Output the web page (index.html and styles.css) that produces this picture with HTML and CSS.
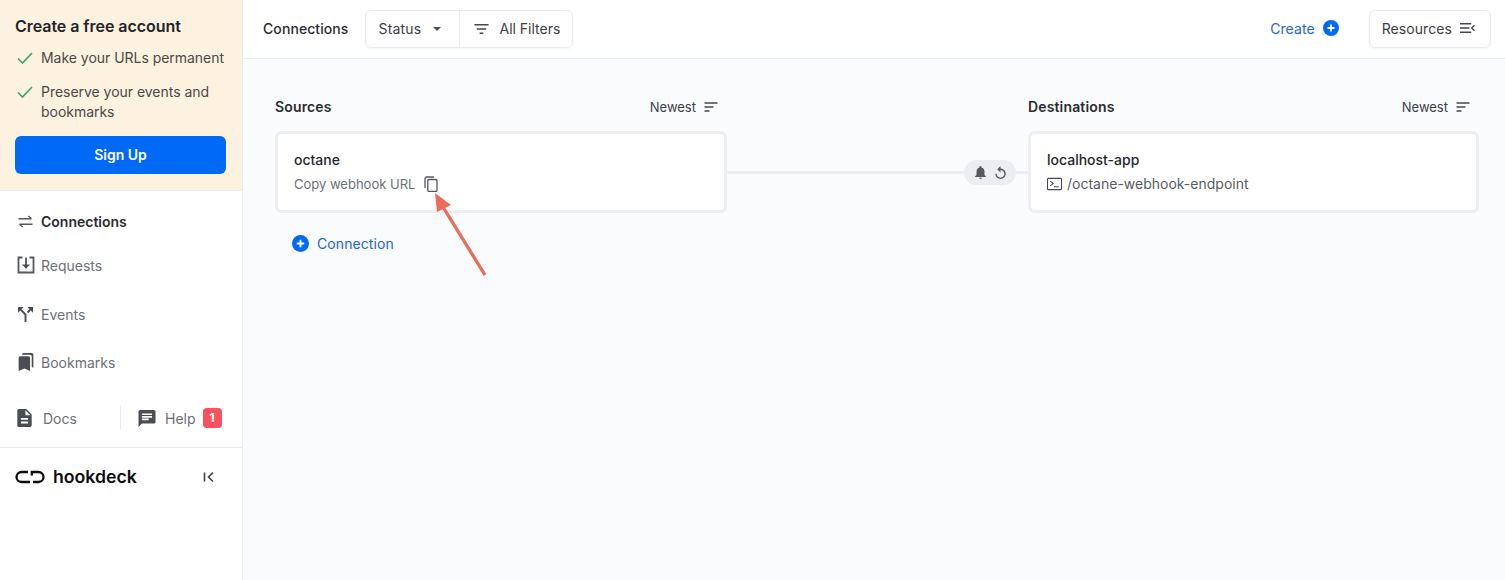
FILE: index.html
```html
<!DOCTYPE html>
<html lang="en">
<head>
<meta charset="utf-8">
<title>Connections</title>
<link rel="stylesheet" href="styles.css">
</head>
<body>
<div class="app">
  <aside class="sidebar">
    <section class="promo">
      <h2 class="promo-title">Create a free account</h2>
      <ul class="promo-list">
        <li class="promo-item"><svg class="check" viewBox="0 0 16 16"><path d="M1 8.500 5.500 13 15 3"/></svg><span>Make your URLs permanent</span></li>
        <li class="promo-item"><svg class="check" viewBox="0 0 16 16"><path d="M1 8.500 5.500 13 15 3"/></svg><span>Preserve your events and bookmarks</span></li>
      </ul>
      <button class="signup">Sign Up</button>
    </section>
    <nav class="nav">
      <a class="nav-item active"><svg class="nav-icon conn" viewBox="0 0 16 14"><path class="stroke" d="M.5 4h14M11 1l3.500 3M15.500 10H1.500M5 13 1.500 10"/></svg>Connections</a>
      <a class="nav-item requests"><svg class="nav-icon big" viewBox="0 0 18 18"><path class="stroke thick" d="M5.500 1.500H1.500v15h15v-15h-4M9 1.500V11.500"/><path class="fill" d="M5 8.500h8L9 12.800z"/></svg>Requests</a>
      <a class="nav-item events"><svg class="nav-icon" viewBox="4 4 16 16"><path class="fill" d="M14 4l2.290 2.290-2.880 2.880 1.420 1.420 2.880-2.880L20 10V4h-6zm-4 0H4v6l2.290-2.290 4.710 4.700V20h2v-8.410l-5.290-5.300L10 4z"/></svg>Events</a>
      <a class="nav-item bookmarks"><svg class="nav-icon big" viewBox="3 1 18 22"><path class="fill" d="M19 18l2 1V3c0-1.100-.9-2-2-2H8.990C7.890 1 7 1.900 7 3h10c1.100 0 2 .9 2 2v13zM15 5H5c-1.100 0-2 .9-2 2v16l7-3 7 3V7c0-1.100-.9-2-2-2z"/></svg>Bookmarks</a>
    </nav>
    <div class="side-links">
      <a class="docs"><svg class="doc-icon" viewBox="4 2 16 20"><path class="fill" d="M14 2H6c-1.100 0-1.990.9-1.990 2L4 20c0 1.100.89 2 1.990 2H18c1.100 0 2-.9 2-2V8l-6-6zm2 16H8v-2h8v2zm0-4H8v-2h8v2zm-3-5V3.500L18.500 9H13z"/></svg>Docs</a>
      <a class="help"><svg class="help-icon" viewBox="2 2 20 20"><path class="fill" d="M20 2H4c-1.100 0-1.990.9-1.990 2L2 22l4-4h14c1.100 0 2-.9 2-2V4c0-1.100-.9-2-2-2zM6 9h12v2H6V9zm8 5H6v-2h8v2zm4-6H6V6h12v2z"/></svg>Help<span class="badge">1</span></a>
    </div>
    <div class="brand">
      <svg class="logo" viewBox="0 0 30 14"><path d="M13 2H6.500a5 5 0 0 0 0 10H15M16.800 5.500V2H23.500a5 5 0 0 1 0 10H18"/></svg>
      <span class="brand-name">hookdeck</span>
      <svg class="collapse" viewBox="0 0 12 12"><path d="M1.500 1.500v9M10 1.500 5.500 6l4.500 4.500"/></svg>
    </div>
  </aside>
  <main class="main">
    <header class="topbar">
      <span class="page-title">Connections</span>
      <div class="filters">
        <button class="filter status">Status<svg class="caret" viewBox="0 0 8 4"><path d="M0 0h8L4 4z"/></svg></button>
        <button class="filter all"><svg class="lines" viewBox="0 0 16 12"><path d="M.5 1.500h15M3 6h10M6 10.500h4"/></svg>All Filters</button>
      </div>
      <a class="create">Create<svg class="plus" viewBox="0 0 16 16"><circle cx="8" cy="8" r="8"/><path d="M8 4.500v7M4.500 8h7"/></svg></a>
      <button class="resources">Resources<svg class="res-icon" viewBox="0 0 16 12"><path d="M0 1.500h12M0 6h10M0 10.500h12M15.500 3 12.500 6l3 3"/></svg></button>
    </header>
    <div class="canvas">
      <section class="col">
        <div class="col-head"><h3 class="col-title">Sources</h3><span class="sort">Newest<svg class="sort-icon" viewBox="0 0 14 10"><path d="M.500 1h13M.500 5h9M.500 9h5"/></svg></span></div>
        <div class="card">
          <div class="card-name">octane</div>
          <div class="card-sub">Copy webhook URL<svg class="copy" viewBox="0 0 14 16"><path d="M1 12V2.500C1 1.600 1.600 1 2.500 1H10"/><rect x="3.800" y="3.500" width="9.200" height="12" rx="1.200"/></svg></div>
        </div>
        <a class="add-conn"><svg class="plus" viewBox="0 0 16 16"><circle cx="8" cy="8" r="8"/><path d="M8 4.500v7M4.500 8h7"/></svg>Connection</a>
      </section>
      <div class="link">
        <span class="link-line"></span>
        <span class="pill">
          <svg class="bell" viewBox="4 2.500 16 19.500"><path d="M12 22c1.100 0 2-.9 2-2h-4c0 1.100.89 2 2 2zm6-6v-5c0-3.070-1.640-5.640-4.500-6.320V4c0-.83-.67-1.500-1.500-1.500s-1.500.67-1.500 1.500v.68C7.630 5.360 6 7.920 6 11v5l-2 2v1h16v-1l-2-2z"/></svg>
          <svg class="retry" viewBox="4 1 16 20"><path d="M12 5V1L7 6l5 5V7c3.310 0 6 2.690 6 6s-2.690 6-6 6-6-2.690-6-6H4c0 4.420 3.580 8 8 8s8-3.580 8-8-3.580-8-8-8z"/></svg>
        </span>
        <span class="link-line short"></span>
      </div>
      <section class="col dest">
        <div class="col-head"><h3 class="col-title">Destinations</h3><span class="sort">Newest<svg class="sort-icon" viewBox="0 0 14 10"><path d="M.500 1h13M.500 5h9M.500 9h5"/></svg></span></div>
        <div class="card">
          <div class="card-name">localhost-app</div>
          <div class="card-sub path"><svg class="term" viewBox="0 0 16 14"><rect x=".5" y="1" width="15" height="12" rx="1"/><path d="M3.500 4 6.500 6.500 3.500 9M7.500 10h5"/></svg><span class="path-text">/octane-webhook-endpoint</span></div>
        </div>
      </section>
    </div>
    <svg class="arrow" viewBox="0 0 52 84"><path class="shaft" d="M49 81 7 13"/><path class="head" d="M-1 -1 15 11 1 18z"/></svg>
  </main>
</div>
</body>
</html>
```
FILE: styles.css
```css
* { box-sizing: border-box; }
html, body { margin: 0; height: 100%; }
body { font-family: Inter, "Liberation Sans", sans-serif; font-size: 14px; color: #2a2c30; background: #fff; overflow: hidden; }
h2, h3, ul { margin: 0; padding: 0; }
button { font: inherit; color: inherit; background: none; border: 0; padding: 0; letter-spacing: inherit; }
svg { display: block; flex: none; }
.app { display: flex; height: 580px; }

.sidebar { width: 243px; flex: none; display: flex; flex-direction: column; border-right: 1px solid #e8ebef; background: #fff; }
.promo { height: 191px; padding: 16px 16px 0 15px; background: #fdf1e0; border-bottom: 1px solid #f1ede6; }
.promo-title { font-size: 16px; line-height: 20px; font-weight: 600; color: #22242a; letter-spacing: -.05px; }
.promo-list { list-style: none; margin-top: 12px; }
.promo-item { display: flex; gap: 8px; line-height: 20px; color: #4b4a46; margin-bottom: 14px; letter-spacing: -.03px; }
.promo-item:last-child { margin-bottom: 0; }
.check { width: 16px; height: 16px; margin: 2px 0 0 2px; fill: none; stroke: #3ba56c; stroke-width: 1.600; }
.promo-item span { width: 186px; }
.signup { display: block; width: 211px; height: 38px; margin-top: 14px; padding-bottom: 2px; border-radius: 6px; background: #0069f5; color: #fff; font-weight: 600; }

.nav { display: flex; flex-direction: column; padding: 18px 0 0 18px; }
.nav-item { display: flex; align-items: center; gap: 8px; height: 24px; color: #6c7078; }
.nav-item.active { color: #2a2c30; font-weight: 600; }
.nav-item.requests { margin-top: 20px; margin-left: -1px; gap: 6px; }
.nav-item.events { margin-top: 25px; }
.nav-item.bookmarks { margin-top: 24px; margin-left: -1px; gap: 6px; }
.nav-icon { width: 15px; height: 15px; }
.nav-icon.conn { height: 13px; }
.nav-icon.big { width: 18px; height: 18px; }
.stroke { fill: none; stroke: #55585e; stroke-width: 1.500; }
.stroke.thick { stroke-width: 1.800; }
.fill { fill: #4a4d53; }

.side-links { display: flex; align-items: center; height: 24px; margin-top: 32px; padding-left: 17px; color: #6c7078; }
.docs { display: flex; align-items: center; gap: 11px; width: 104px; height: 24px; border-right: 1px solid #e8ebef; }
.doc-icon { width: 15px; height: 18px; }
.help { display: flex; align-items: center; margin-left: 17px; }
.help-icon { width: 18px; height: 17px; margin-right: 9px; }
.badge { width: 19px; height: 20px; margin-left: 7px; margin-top: -1px; border-radius: 4px; background: #f9525e; color: #fff; font-size: 12px; font-weight: 700; line-height: 20px; text-align: center; }

.brand { display: flex; align-items: center; margin-top: 17px; height: 60px; padding: 0 0 2px 15px; border-top: 1px solid #e8ebef; }
.logo { width: 30px; height: 14px; fill: none; stroke: #0b0d10; stroke-width: 2.300; }
.brand-name { margin-left: 8px; font-size: 17.700px; font-weight: 600; color: #0b0d10; }
.collapse { width: 12px; height: 12px; margin-left: 66px; fill: none; stroke: #3d4045; stroke-width: 1.600; }

.main { position: relative; flex: 1; display: flex; flex-direction: column; min-width: 0; background: #fafbfd; letter-spacing: .08px; }
.topbar { display: flex; align-items: center; height: 59px; flex: none; padding: 0 14px 0 20px; background: #fff; border-bottom: 1px solid #e8ebef; }
.page-title { font-weight: 500; color: #2a2c30; padding-bottom: 2px; }
.filters { display: flex; height: 38px; margin-left: 17px; border: 1px solid #e9ecef; border-radius: 6px; box-shadow: 0 1px 2px rgba(20,30,50,.05); }
.filter { display: flex; align-items: center; height: 100%; padding-bottom: 2px; color: #3d4046; }
.filter.status { width: 94px; padding-left: 12px; border-right: 1px solid #e9ecef; letter-spacing: .2px; }
.filter.all { padding: 0 12px 2px 14px; gap: 10px; letter-spacing: 0; }
.caret { width: 8px; height: 4px; margin: 2px 0 0 12px; fill: #4f5258; }
.lines { width: 15px; height: 12px; fill: none; stroke: #44474d; stroke-width: 1.500; margin-top: 2px; }
.create { display: flex; align-items: center; gap: 8px; margin-left: auto; padding-bottom: 2px; color: #1d66dc; }
.plus { flex: none; width: 16px; height: 16px; }
.plus circle { fill: #0069f5; }
.plus path { fill: none; stroke: #fff; stroke-width: 1.800; }
.resources { display: flex; align-items: center; gap: 8px; height: 38px; margin-left: 30px; padding: 0 15px 2px 12px; border: 1px solid #e9ecef; border-radius: 6px; color: #3d4046; box-shadow: 0 1px 2px rgba(20,30,50,.05); }
.res-icon { width: 15px; height: 12px; fill: none; stroke: #44474d; stroke-width: 1.500; }

.canvas { display: flex; align-items: flex-start; padding: 36px 26px 0 32px; }
.col { width: 452px; flex: none; }
.col.dest { width: 451px; }
.col-head { display: flex; align-items: center; justify-content: space-between; height: 24px; padding-right: 9px; }
.col-title { font-size: 14px; font-weight: 600; color: #2a2c30; padding-bottom: 2px; letter-spacing: .15px; }
.sort { display: flex; align-items: center; gap: 8px; font-size: 13px; color: #3d4046; letter-spacing: 0; }
.sort-icon { width: 14px; height: 10px; fill: none; stroke: #44474d; stroke-width: 1.300; }
.card { height: 82px; margin-top: 12px; padding: 16px 16px 0; background: #fff; border: 3px solid #eceef2; border-radius: 7px; }
.card-name { font-size: 14px; line-height: 20px; font-weight: 500; color: #25272c; letter-spacing: 0; }
.card-sub { display: flex; align-items: center; gap: 9px; height: 20px; margin-top: 4px; font-size: 13px; color: #6c7078; letter-spacing: 0; }
.card-sub.path { gap: 5px; font-size: 14px; color: #585b61; }
.path-text { padding-bottom: 2px; }
.copy { width: 14px; height: 16px; fill: none; stroke: #55585e; stroke-width: 1.300; margin-top: -1px; }
.term { width: 15px; height: 14px; fill: none; stroke: #44474d; stroke-width: 1.100; }
.add-conn { display: flex; align-items: center; gap: 8px; margin: 22px 0 0 17px; height: 16px; color: #1d66dc; }
.add-conn .plus { width: 17px; height: 17px; }

.link { display: flex; align-items: center; width: 301px; flex: none; margin-top: 61px; padding-top: 4px; }
.link-line { flex: 1; height: 3px; background: #eceef1; }
.link-line.short { flex: none; width: 12px; }
.pill { display: flex; align-items: center; justify-content: center; gap: 9px; width: 52px; height: 25px; flex: none; border-radius: 13px; background: #ebedf0; }
.bell { width: 11px; height: 13px; fill: #55585e; }
.retry { width: 11px; height: 13px; fill: #55585e; }

.arrow { position: absolute; left: 193px; top: 194px; width: 52px; height: 84px; overflow: visible; }
.shaft { fill: none; stroke: #ee6a5b; stroke-width: 3.300; }
.head { fill: #ee6a5b; }
```
